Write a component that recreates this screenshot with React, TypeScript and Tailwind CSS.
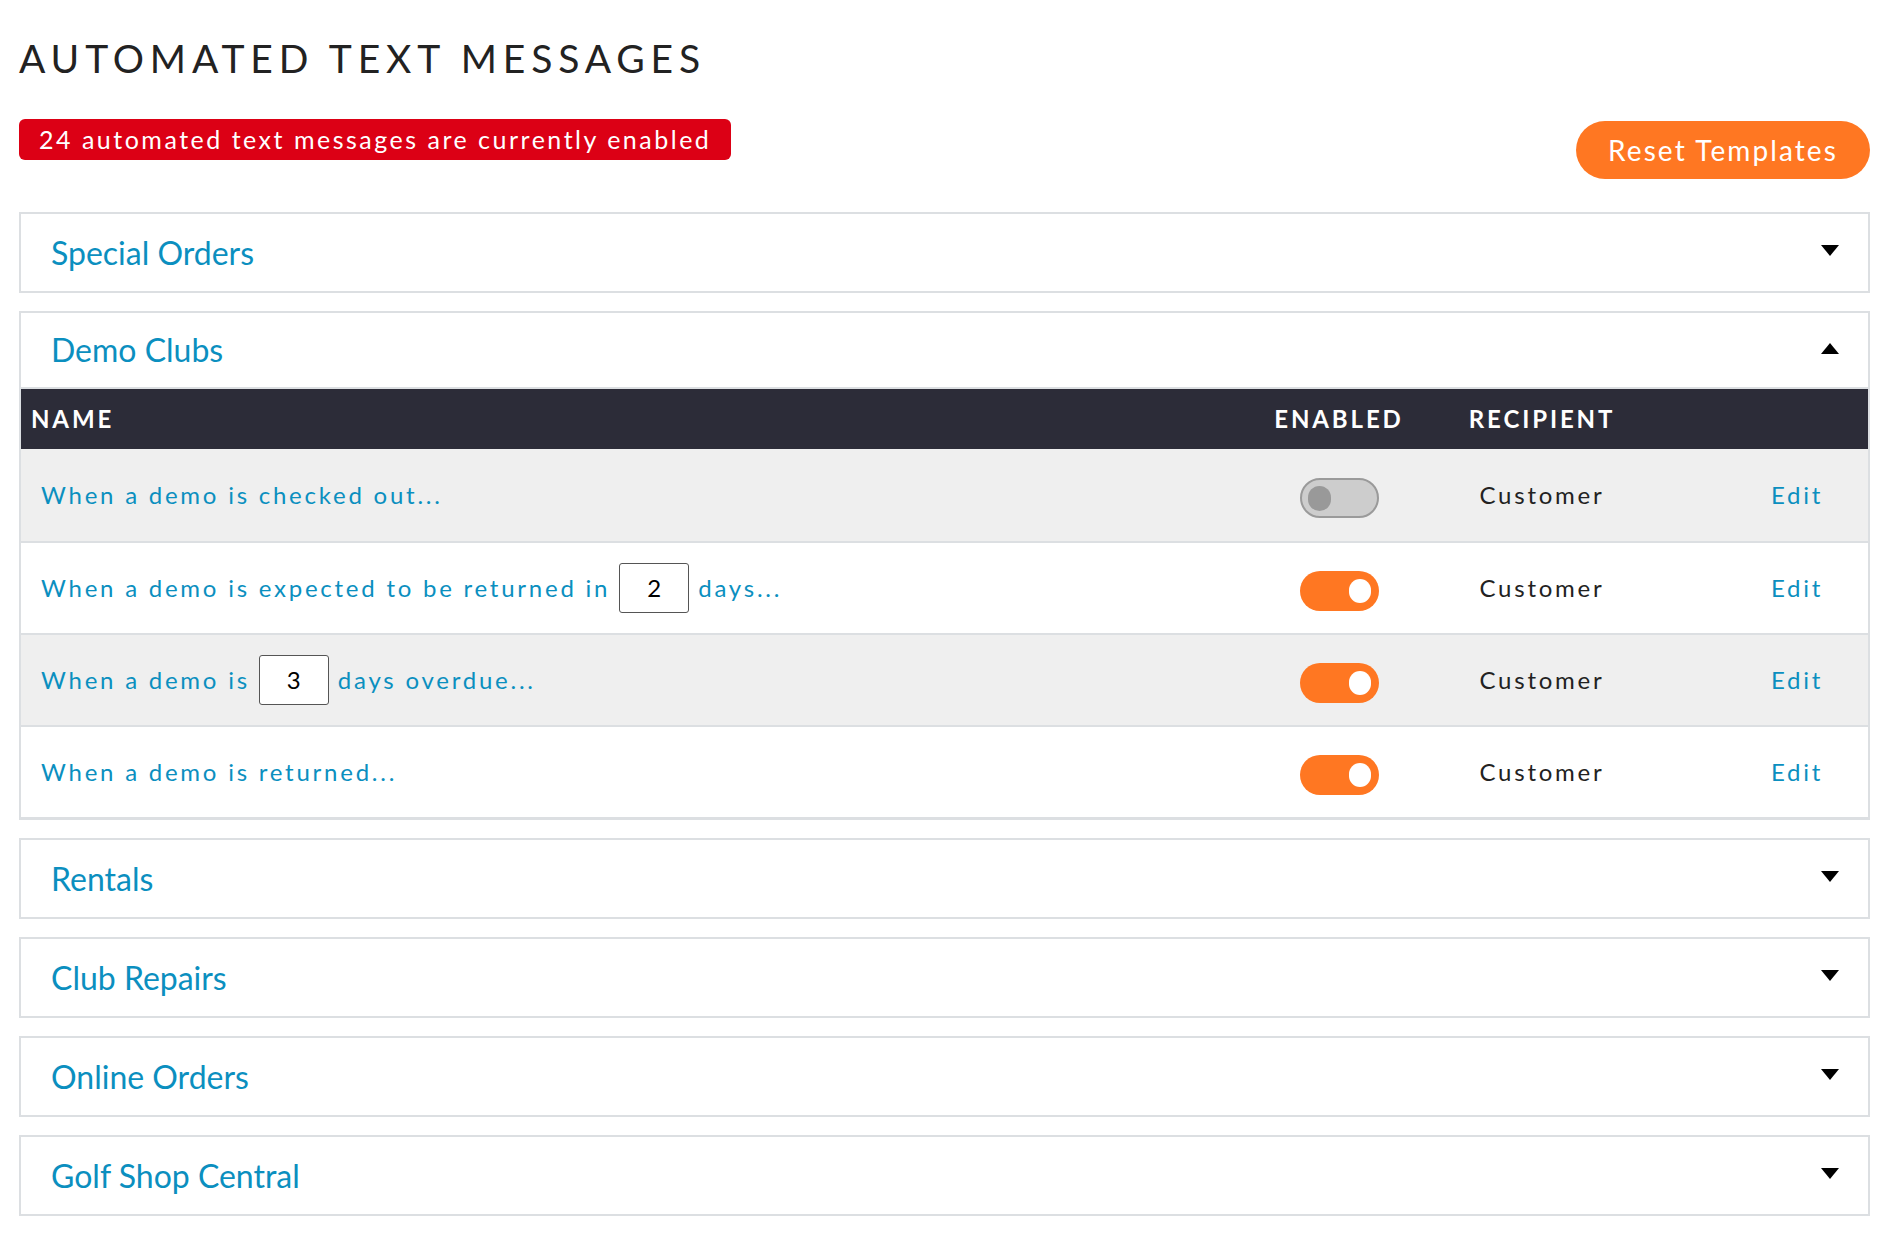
import React from "react";

const font = { fontFamily: "Lato, 'Open Sans', sans-serif" };

function Caret({ up = false }: { up?: boolean }) {
  return (
    <svg width="18" height="11" viewBox="0 0 18 11" className="mb-[4px] shrink-0">
      {up ? <path d="M9 0 L18 11 L0 11 Z" fill="#000" /> : <path d="M0 0 L18 0 L9 11 Z" fill="#000" />}
    </svg>
  );
}

function Toggle({ on }: { on: boolean }) {
  if (on) {
    return (
      <div className="relative h-[40px] w-[79px] rounded-full bg-[#ff7722]">
        <div className="absolute right-[8px] top-[8px] h-[24px] w-[22px] rounded-full bg-white" />
      </div>
    );
  }
  return (
    <div className="relative h-[40px] w-[79px] rounded-full border-2 border-[#9a9a9a] bg-[#cdcdcd]">
      <div className="absolute left-[6px] top-[6px] h-[25px] w-[23px] rounded-full bg-[#999]" />
    </div>
  );
}

function DayInput({ value }: { value: string }) {
  return (
    <span className="mx-[9px] inline-flex h-[50px] w-[70px] items-center justify-center rounded-[3px] border border-[#555] bg-white text-[24px] text-black tracking-normal">
      {value}
    </span>
  );
}

function Panel({ title }: { title: string }) {
  return (
    <div className="flex h-[81px] items-center justify-between border-2 border-[#dcdfe2] bg-white pl-[30px] pr-[29px]">
      <span className="text-[32px] text-[#0b8fbf]">{title}</span>
      <Caret />
    </div>
  );
}

const rows: { name: React.ReactNode; on: boolean }[] = [
  { name: <>When a demo is checked out...</>, on: false },
  {
    name: (
      <>
        When a demo is expected to be returned in <DayInput value="2" /> days...
      </>
    ),
    on: true,
  },
  {
    name: (
      <>
        When a demo is <DayInput value="3" /> days overdue...
      </>
    ),
    on: true,
  },
  { name: <>When a demo is returned...</>, on: true },
];

export default function App() {
  return (
    <div className="min-h-screen bg-white pl-[19px] pr-[22px] pt-[28px]" style={font}>
      {/* Title */}
      <h1 className="text-[39px] leading-[60px] tracking-[0.15em] text-[#222]">AUTOMATED TEXT MESSAGES</h1>

      {/* Status + reset */}
      <div className="mt-[31px] flex items-start justify-between">
        <div className="flex h-[41px] items-center rounded-[6px] bg-[#dc0015] px-[20px] text-[25px] tracking-[0.1em] text-white">
          24 automated text messages are currently enabled
        </div>
        <button className="mt-[2px] h-[58px] w-[294px] rounded-full bg-[#ff7722] text-[28px] tracking-[0.075em] text-white">
          Reset Templates
        </button>
      </div>

      <div className="mt-[33px] flex flex-col gap-[18px]">
        <Panel title="Special Orders" />

        {/* Demo Clubs (open) */}
        <div className="border-2 border-b-[3px] border-[#dcdfe2] bg-white">
          <div className="flex h-[76px] items-center justify-between border-b-2 border-[#dcdfe2] pl-[30px] pr-[29px]">
            <span className="text-[32px] text-[#0b8fbf]">Demo Clubs</span>
            <Caret up />
          </div>
          <div className="grid h-[60px] grid-cols-[1fr_170px_236px_208px] items-center bg-[#2c2c38] text-[24px] font-bold tracking-[0.12em] text-white">
            <span className="pl-[10px]">NAME</span>
            <span className="text-center">ENABLED</span>
            <span className="text-center">RECIPIENT</span>
            <span />
          </div>
          {rows.map((r, i) => (
            <div
              key={i}
              className={`grid h-[92px] grid-cols-[1fr_170px_236px_208px] items-center text-[24px] tracking-[0.115em] ${
                i > 0 ? "border-t-2 border-[#dcdfe2]" : ""
              } ${i % 2 === 0 ? "bg-[#efefef]" : "bg-white"}`}
            >
              <span className="flex items-center pl-[20px] text-[#0b8fbf]">{r.name}</span>
              <div className="flex justify-center pt-[5px]">
                <Toggle on={r.on} />
              </div>
              <span className="text-center text-[#222]">Customer</span>
              <span className="pl-[111px] text-[#0b8fbf]">Edit</span>
            </div>
          ))}
        </div>

        <Panel title="Rentals" />
        <Panel title="Club Repairs" />
        <Panel title="Online Orders" />
        <Panel title="Golf Shop Central" />
      </div>
    </div>
  );
}
